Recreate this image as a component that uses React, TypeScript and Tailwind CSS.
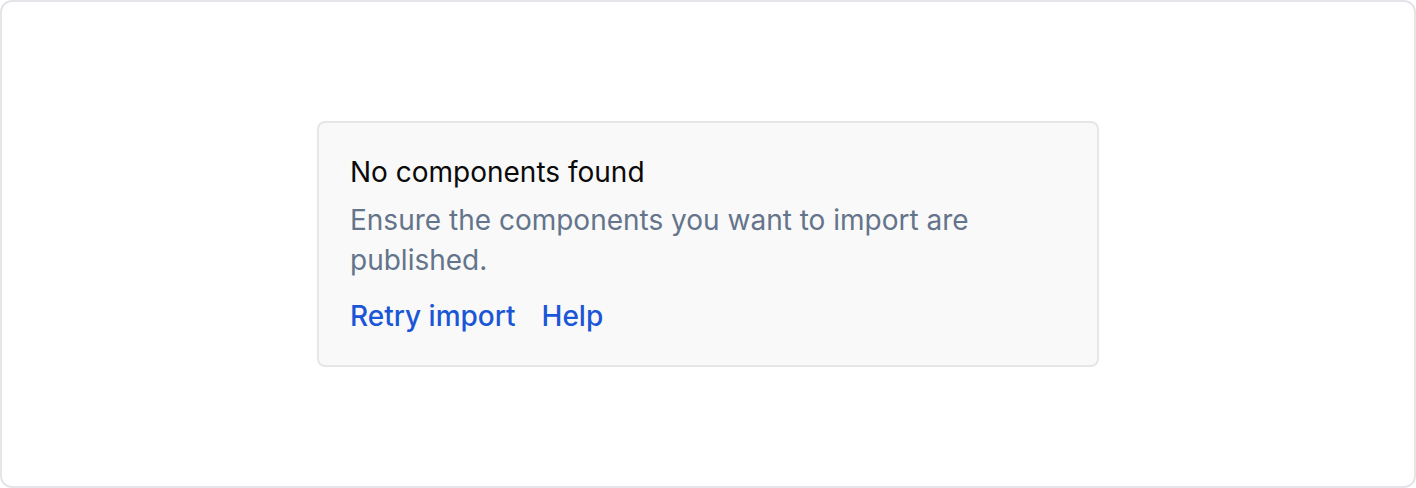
export default function App() {
  return (
    <div
      className="flex h-[488px] w-[1416px] items-center justify-center rounded-xl border-2 border-[#e3e5e9] bg-white"
      style={{ fontFamily: "Inter, 'Noto Sans', sans-serif" }}
    >
      <div className="w-[782px] rounded-lg border-2 border-[#e6e6e6] bg-[#f9f9f9] px-[31px] pt-[32px] pb-[32px]">
        <h2 className="text-[28px] leading-[34px] font-normal text-[#0a0a0a]">No components found</h2>
        <p className="mt-[11px] text-[28px] leading-[40px] text-[#64748b]">
          Ensure the components you want to import are published.
        </p>
        <div className="mt-[19px] flex gap-[26px] text-[28px] leading-[34px] font-medium text-[#1b56d6]">
          <a href="#">Retry import</a>
          <a href="#">Help</a>
        </div>
      </div>
    </div>
  );
}
